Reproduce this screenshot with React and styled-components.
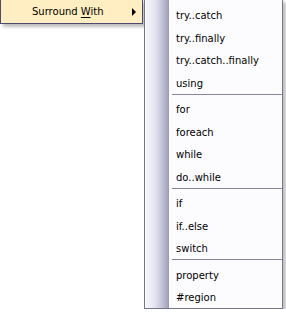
import React from 'react';
import styled, { createGlobalStyle } from 'styled-components';

const GROUPS = [
  ['try..catch', 'try..finally', 'try..catch..finally', 'using'],
  ['for', 'foreach', 'while', 'do..while'],
  ['if', 'if..else', 'switch'],
  ['property', '#region'],
];

const GlobalStyle = createGlobalStyle`
  body {
    margin: 0;
    background: #ffffff;
    font-family: "DejaVu Sans", "Liberation Sans", sans-serif;
    font-size: 10px;
    color: #000000;
    overflow: hidden;
  }
`;

export default function App() {
  return (
    <>
      <GlobalStyle />
      <Page>
        <ParentItem>
          <Label>
            Surround <u>W</u>ith
          </Label>
          <Arrow />
        </ParentItem>
        <SubMenu>
          {GROUPS.map((group, gi) => (
            <React.Fragment key={gi}>
              {gi > 0 && <Separator />}
              {group.map((item) => (
                <Item key={item}>{item}</Item>
              ))}
            </React.Fragment>
          ))}
        </SubMenu>
      </Page>
    </>
  );
}

const Page = styled.div`
  display: flex;
  align-items: flex-start;
  gap: 1px;
  margin-top: -1px;
`;

const ParentItem = styled.div`
  display: flex;
  align-items: center;
  box-sizing: border-box;
  width: 143px;
  height: 25px;
  padding: 0 6px 0 31px;
  background: #ffeec2;
  border: 1px solid #4b4b6f;
  box-shadow: 3px 3px 3px rgba(0, 0, 0, 0.25);
`;

const Label = styled.span`
  flex: 1;
  padding-top: 1px;
  line-height: 22px;
  white-space: nowrap;
  u {
    text-decoration: underline;
    text-underline-offset: 2px;
  }
`;

const Arrow = styled.span`
  width: 0;
  height: 0;
  border-left: 4px solid #000000;
  border-top: 4px solid transparent;
  border-bottom: 4px solid transparent;
`;

const SubMenu = styled.div`
  display: flex;
  flex-direction: column;
  box-sizing: border-box;
  width: 139px;
  padding: 2px 0 1px;
  border: 1px solid #76768f;
  background: linear-gradient(
      to right,
      #f8f8fe 0,
      #e4e4f0 10px,
      #b9b9d0 19px,
      #9b9bb7 24px,
      transparent 24px
    ),
    #fcfcff;
  box-shadow: 3px 3px 3px rgba(0, 0, 0, 0.25);
`;

const Item = styled.div`
  box-sizing: border-box;
  height: 22.5px;
  padding: 5px 0 0 31px;
  line-height: 17.5px;
  white-space: nowrap;
`;

const Separator = styled.div`
  height: 1px;
  margin: 1.5px 0 1.5px 27px;
  background: #8585a0;
`;
